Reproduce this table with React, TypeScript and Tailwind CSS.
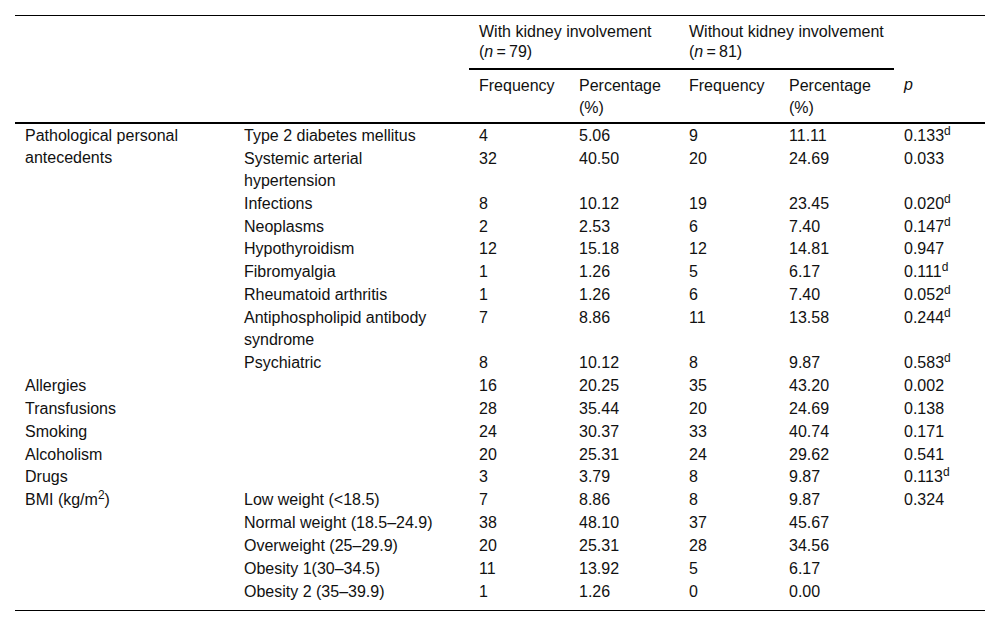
import React from 'react';

type Row = {
  group?: string;
  groupSpan?: number;
  sub: string;
  f1: string;
  p1: string;
  f2: string;
  p2: string;
  p: string;
  d?: boolean;
};

const rows: Row[] = [
  { group: 'Pathological personal antecedents', groupSpan: 9, sub: 'Type 2 diabetes mellitus', f1: '4', p1: '5.06', f2: '9', p2: '11.11', p: '0.133', d: true },
  { sub: 'Systemic arterial hypertension', f1: '32', p1: '40.50', f2: '20', p2: '24.69', p: '0.033' },
  { sub: 'Infections', f1: '8', p1: '10.12', f2: '19', p2: '23.45', p: '0.020', d: true },
  { sub: 'Neoplasms', f1: '2', p1: '2.53', f2: '6', p2: '7.40', p: '0.147', d: true },
  { sub: 'Hypothyroidism', f1: '12', p1: '15.18', f2: '12', p2: '14.81', p: '0.947' },
  { sub: 'Fibromyalgia', f1: '1', p1: '1.26', f2: '5', p2: '6.17', p: '0.111', d: true },
  { sub: 'Rheumatoid arthritis', f1: '1', p1: '1.26', f2: '6', p2: '7.40', p: '0.052', d: true },
  { sub: 'Antiphospholipid antibody syndrome', f1: '7', p1: '8.86', f2: '11', p2: '13.58', p: '0.244', d: true },
  { sub: 'Psychiatric', f1: '8', p1: '10.12', f2: '8', p2: '9.87', p: '0.583', d: true },
  { group: 'Allergies', groupSpan: 1, sub: '', f1: '16', p1: '20.25', f2: '35', p2: '43.20', p: '0.002' },
  { group: 'Transfusions', groupSpan: 1, sub: '', f1: '28', p1: '35.44', f2: '20', p2: '24.69', p: '0.138' },
  { group: 'Smoking', groupSpan: 1, sub: '', f1: '24', p1: '30.37', f2: '33', p2: '40.74', p: '0.171' },
  { group: 'Alcoholism', groupSpan: 1, sub: '', f1: '20', p1: '25.31', f2: '24', p2: '29.62', p: '0.541' },
  { group: 'Drugs', groupSpan: 1, sub: '', f1: '3', p1: '3.79', f2: '8', p2: '9.87', p: '0.113', d: true },
  { group: 'BMI', groupSpan: 5, sub: 'Low weight (<18.5)', f1: '7', p1: '8.86', f2: '8', p2: '9.87', p: '0.324' },
  { sub: 'Normal weight (18.5–24.9)', f1: '38', p1: '48.10', f2: '37', p2: '45.67', p: '' },
  { sub: 'Overweight (25–29.9)', f1: '20', p1: '25.31', f2: '28', p2: '34.56', p: '' },
  { sub: 'Obesity 1(30–34.5)', f1: '11', p1: '13.92', f2: '5', p2: '6.17', p: '' },
  { sub: 'Obesity 2 (35–39.9)', f1: '1', p1: '1.26', f2: '0', p2: '0.00', p: '' },
];

function GroupN({ n }: { n: string }) {
  return (
    <span className="whitespace-nowrap">
      (<i>n</i>
      {'\u202F=\u202F'}
      {n})
    </span>
  );
}

export default function App() {
  // shared cell look; rows sit ~23px apart, wrapped lines 22px
  const cell = 'pl-[10px] pr-[4px] align-top text-left font-normal text-[16px]';
  const body = `${cell} leading-[22px] pt-[0.9px] pb-0`;
  const head1 = `${cell} leading-[20px] pt-[6px] pb-[6px]`;
  const head2 = `${cell} leading-[22px] pt-[5px] pb-[3px]`;

  return (
    <div className="min-h-screen bg-white px-[15px] pt-[15px] text-[#111] font-['Liberation_Sans',Arial,sans-serif]">
      <table className="w-[970px] table-fixed border-collapse border-t border-black">
        <colgroup>
          <col className="w-[219px]" />
          <col className="w-[235px]" />
          <col className="w-[100px]" />
          <col className="w-[110px]" />
          <col className="w-[100px]" />
          <col className="w-[115px]" />
          <col className="w-[91px]" />
        </colgroup>
        <thead>
          <tr>
            <th className={head1}></th>
            <th className={head1}></th>
            <th colSpan={2} className={`${head1} border-b-2 border-black`}>
              With kidney involvement <GroupN n="79" />
            </th>
            <th colSpan={2} className={`${head1} border-b-2 border-black`}>
              Without kidney involvement <GroupN n="81" />
            </th>
            <th className={head1}></th>
          </tr>
          <tr className="border-b-2 border-black">
            <th className={head2}></th>
            <th className={head2}></th>
            <th className={head2}>Frequency</th>
            <th className={head2}>Percentage (%)</th>
            <th className={head2}>Frequency</th>
            <th className={head2}>Percentage (%)</th>
            <th className={head2}>
              <i>p</i>
            </th>
          </tr>
        </thead>
        <tbody className="border-b border-black">
          {rows.map((r, i) => {
            const last = i === rows.length - 1;
            const pad = last ? 'pb-[7px]' : '';
            return (
              <tr key={i}>
                {r.group !== undefined && (
                  <td
                    rowSpan={r.groupSpan}
                    className={`${body} ${r.groupSpan && i + r.groupSpan === rows.length ? 'pb-[7px]' : ''}`}
                  >
                    {r.group === 'BMI' ? (
                      <>
                        BMI (kg/m<sup>2</sup>)
                      </>
                    ) : (
                      r.group
                    )}
                  </td>
                )}
                <td className={`${body} pr-[24px] ${pad}`}>{r.sub}</td>
                <td className={`${body} ${pad}`}>{r.f1}</td>
                <td className={`${body} ${pad}`}>{r.p1}</td>
                <td className={`${body} ${pad}`}>{r.f2}</td>
                <td className={`${body} ${pad}`}>{r.p2}</td>
                <td className={`${body} ${pad}`}>
                  {r.p}
                  {r.d && <sup>d</sup>}
                </td>
              </tr>
            );
          })}
        </tbody>
      </table>
    </div>
  );
}
